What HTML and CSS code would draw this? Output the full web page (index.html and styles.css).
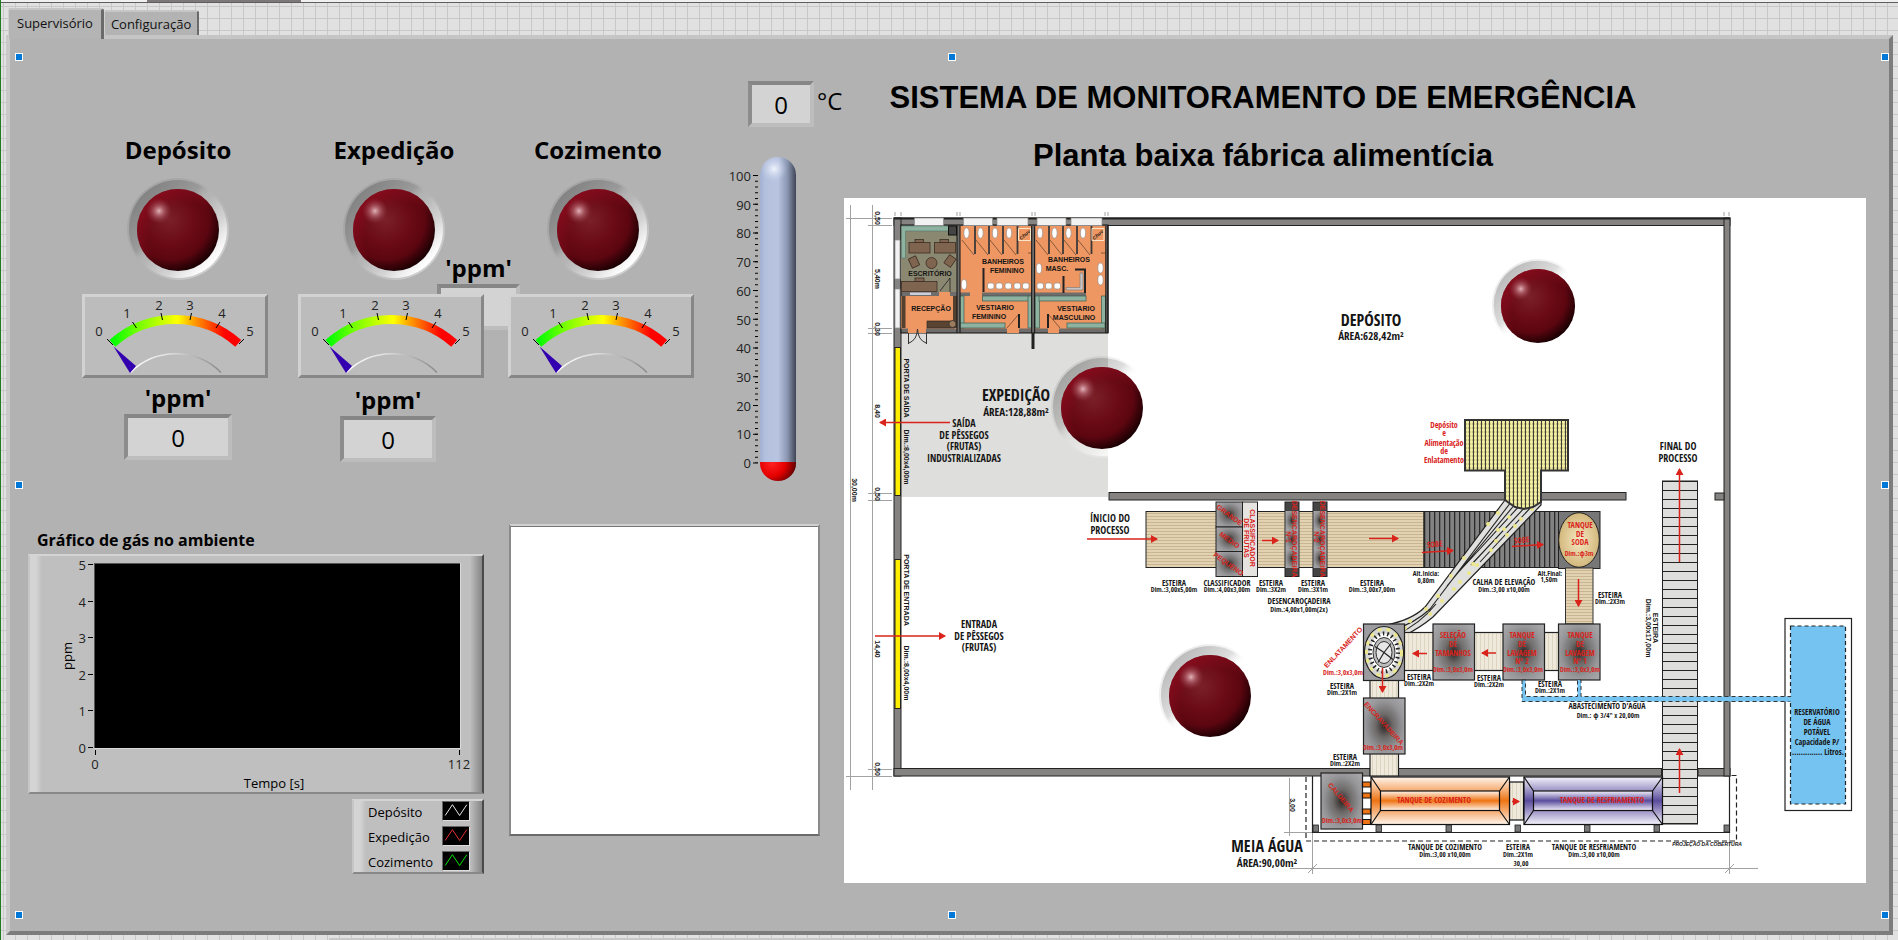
FILE: index.html
```html
<!DOCTYPE html>
<html lang="pt-BR">
<head>
<meta charset="utf-8">
<title>Sistema de monitoramento de emergência</title>
<link rel="stylesheet" href="styles.css">
</head>
<body>
<svg class="defs" aria-hidden="true">
  <defs>
    <linearGradient id="bezel" x1="0.15" y1="0.15" x2="0.85" y2="0.85">
      <stop offset="0" stop-color="#000" stop-opacity=".2"/>
      <stop offset=".35" stop-color="#000" stop-opacity=".1"/>
      <stop offset=".5" stop-color="#fff" stop-opacity=".02"/>
      <stop offset=".75" stop-color="#fff" stop-opacity=".35"/>
      <stop offset="1" stop-color="#fff" stop-opacity="1"/>
    </linearGradient>
    <radialGradient id="bulb" cx=".4" cy=".38" r=".64">
      <stop offset="0" stop-color="#7a2029"/>
      <stop offset=".45" stop-color="#6b0b16"/>
      <stop offset=".75" stop-color="#5c0610"/>
      <stop offset="1" stop-color="#1c0003"/>
    </radialGradient>
    <radialGradient id="rim" cx=".6" cy=".62" r=".64">
      <stop offset=".7" stop-color="#8c0c1e" stop-opacity="0"/>
      <stop offset="1" stop-color="#8c0c1e" stop-opacity=".8"/>
    </radialGradient>
    <radialGradient id="shine">
      <stop offset="0" stop-color="#e2b4ba"/>
      <stop offset=".4" stop-color="#b86c76" stop-opacity=".7"/>
      <stop offset="1" stop-color="#8a3540" stop-opacity="0"/>
    </radialGradient>
    <symbol id="led" viewBox="0 0 104 104">
      <circle cx="52" cy="51" r="51" fill="url(#bezel)" opacity=".4"/>
      <circle cx="52" cy="51" r="49" fill="url(#bezel)"/>
      <circle cx="52" cy="52" r="41" fill="url(#bulb)"/>
      <circle cx="52" cy="52" r="41" fill="url(#rim)"/>
      <circle cx="33" cy="33" r="13" fill="url(#shine)"/>
    </symbol>
    <linearGradient id="scale" gradientUnits="userSpaceOnUse" x1="27" x2="140" y1="0" y2="0">
      <stop offset="0" stop-color="#0f0"/>
      <stop offset=".2" stop-color="#66ff00"/>
      <stop offset=".58" stop-color="#ff0"/>
      <stop offset=".72" stop-color="#ffa000"/>
      <stop offset="1" stop-color="#f00"/>
    </linearGradient>
    <linearGradient id="hub" x1="0" x2="1" y1="0" y2="0">
      <stop offset="0" stop-color="#fff"/>
      <stop offset=".45" stop-color="#ddd"/>
      <stop offset="1" stop-color="#888"/>
    </linearGradient>
    <symbol id="dial" viewBox="0 0 180 78">
      <path d="M27.400 46.400A95 95 0 0 1 153.200 46.400" fill="none" stroke="url(#scale)" stroke-width="9"/>
      <path d="M22 42l6 6M47.500 25l4 6M76 16l1.500 7M106.500 16l-1.500 7M135 25l-4 6M159 42l-5 5" stroke="#000" stroke-width="1" fill="none"/>
      <path d="M45.500 75.500A64 64 0 0 1 136 75.500" fill="none" stroke="url(#hub)" stroke-width="1.500"/>
      <path d="M28.500 49.500L45 76l6-7z" fill="#3300b0"/>
    </symbol>
    <linearGradient id="tube" x1="0" x2="1" y1="0" y2="0">
      <stop offset="0" stop-color="#a3b0d0"/>
      <stop offset=".15" stop-color="#b4c1de"/>
      <stop offset=".5" stop-color="#b8c4e0"/>
      <stop offset=".75" stop-color="#8d99b4"/>
      <stop offset="1" stop-color="#3f4556"/>
    </linearGradient>
    <radialGradient id="fluid" gradientUnits="userSpaceOnUse" cx="772" cy="462" r="26">
      <stop offset="0" stop-color="#f22"/>
      <stop offset=".5" stop-color="#e60000"/>
      <stop offset="1" stop-color="#4a0000"/>
    </radialGradient>
    <radialGradient id="cap">
      <stop offset="0" stop-color="#f2f5fd"/>
      <stop offset="1" stop-color="#c4cfe9" stop-opacity="0"/>
    </radialGradient>
    <pattern id="minor" patternUnits="userSpaceOnUse" x="755" y="174" width="4" height="5.750">
      <rect width="4" height="1" fill="#000"/>
    </pattern>
    <pattern id="major" patternUnits="userSpaceOnUse" x="753" y="174" width="6" height="28.750">
      <rect width="6" height="1" fill="#000"/>
    </pattern>
    <pattern id="belt" patternUnits="userSpaceOnUse" width="10" height="3">
      <rect width="10" height="3" fill="#e2d2b2"/><rect width="10" height="1" fill="#c8b592"/>
    </pattern>
    <pattern id="beltlight" patternUnits="userSpaceOnUse" width="4" height="10">
      <rect width="4" height="10" fill="#eee9db"/><rect width="1" height="10" fill="#ddd5c2"/>
    </pattern>
    <pattern id="lift" patternUnits="userSpaceOnUse" x="1424" width="5" height="10">
      <rect width="5" height="10" fill="#828282"/><rect width="1.300" height="10" fill="#2a2a2a"/>
    </pattern>
    <pattern id="cans" patternUnits="userSpaceOnUse" x="1465" y="420" width="4" height="4">
      <rect width="4" height="4" fill="#a6a472"/><ellipse cx="2.400" cy="2" rx="1.600" ry="1.900" fill="#f2edA0"/><rect width=".8" height="4" fill="#222"/>
    </pattern>
    <pattern id="steps" patternUnits="userSpaceOnUse" x="1662" y="481" width="35" height="9">
      <rect width="35" height="9" fill="#dededc"/><rect width="35" height="1" fill="#222"/>
    </pattern>
    <radialGradient id="metal" r=".7">
      <stop offset="0" stop-color="#2a2725"/><stop offset=".3" stop-color="#6d6a69"/><stop offset=".65" stop-color="#97979a"/><stop offset="1" stop-color="#acacb0"/>
    </radialGradient>
    <radialGradient id="soda"><stop offset="0" stop-color="#f6e7c2"/><stop offset="1" stop-color="#d2b87c"/></radialGradient>
    <linearGradient id="hot" x1="0" x2="0" y1="0" y2="1">
      <stop offset="0" stop-color="#fff5ec"/><stop offset=".5" stop-color="#ee7414"/><stop offset="1" stop-color="#fff5ec"/>
    </linearGradient>
    <linearGradient id="cold" x1="0" x2="0" y1="0" y2="1">
      <stop offset="0" stop-color="#f4f2fb"/><stop offset=".5" stop-color="#5a4c9c"/><stop offset="1" stop-color="#f4f2fb"/>
    </linearGradient>
    <marker id="tip" markerUnits="userSpaceOnUse" markerWidth="8" markerHeight="8" refX="6" refY="4" orient="auto"><path d="M0 0L7 4L0 8z" fill="#d9231b"/></marker>
  </defs>
</svg>

<div class="ruler"></div>
<nav class="tabs" role="tablist">
  <button class="tab tab-active" role="tab" aria-selected="true">Supervisório</button>
  <button class="tab" role="tab" aria-selected="false">Configuração</button>
</nav>

<main class="panel">
  <section class="left">
    <div class="instruments">
      <div class="hidden-reading">
        <label class="title" for="v3">'ppm'</label>
        <input id="v3" class="value" type="text">
      </div>

      <div class="station">
        <h3 class="title">Depósito</h3>
        <svg class="led"><use href="#led"/></svg>
        <svg class="gauge" viewBox="0 0 180 78">
          <use href="#dial" width="180" height="78"/>
          <g class="dial-text"><text x="14" y="39">0</text><text x="42" y="21">1</text><text x="74" y="13">2</text><text x="105" y="13">3</text><text x="137" y="21">4</text><text x="165" y="39">5</text></g>
        </svg>
        <div class="reading-stack">
          <label class="title" for="v1">'ppm'</label>
          <input id="v1" class="value value-wide" type="text" value="0">
        </div>
      </div>

      <div class="station">
        <h3 class="title">Expedição</h3>
        <svg class="led"><use href="#led"/></svg>
        <svg class="gauge" viewBox="0 0 180 78">
          <use href="#dial" width="180" height="78"/>
          <g class="dial-text"><text x="14" y="39">0</text><text x="42" y="21">1</text><text x="74" y="13">2</text><text x="105" y="13">3</text><text x="137" y="21">4</text><text x="165" y="39">5</text></g>
        </svg>
        <div class="reading-stack reading-low">
          <label class="title" for="v2">'ppm'</label>
          <input id="v2" class="value value-mid" type="text" value="0">
        </div>
      </div>

      <div class="station station-last">
        <h3 class="title">Cozimento</h3>
        <svg class="led"><use href="#led"/></svg>
        <svg class="gauge" viewBox="0 0 180 78">
          <use href="#dial" width="180" height="78"/>
          <g class="dial-text"><text x="14" y="39">0</text><text x="42" y="21">1</text><text x="74" y="13">2</text><text x="105" y="13">3</text><text x="137" y="21">4</text><text x="165" y="39">5</text></g>
        </svg>
      </div>

      <div class="thermo">
        <div class="reading">
          <input id="temp" class="value" type="text" value="0">
          <label for="temp">°C</label>
        </div>
        <svg class="thermometer" viewBox="728 150 70 336">
          <rect x="760" y="156" width="36" height="324" rx="18" fill="url(#tube)"/>
          <path d="M760 461H796V462A18 18 0 0 1 760 462z" fill="url(#fluid)"/>
          <circle cx="774" cy="168" r="13" fill="url(#cap)"/>
          <rect x="755" y="174" width="3" height="288" fill="url(#minor)"/>
          <rect x="753" y="174" width="5" height="289" fill="url(#major)"/>
          <g class="scale-text">
            <text x="751" y="180">100</text><text x="751" y="209">90</text><text x="751" y="237">80</text><text x="751" y="266">70</text><text x="751" y="295">60</text><text x="751" y="324">50</text><text x="751" y="352">40</text><text x="751" y="381">30</text><text x="751" y="410">20</text><text x="751" y="438">10</text><text x="751" y="467">0</text>
          </g>
        </svg>
      </div>
    </div>

    <div class="lower">
      <section class="chart">
        <h4>Gráfico de gás no ambiente</h4>
        <div class="frame chart-frame">
          <svg class="plot" viewBox="30 555 452 236">
            <rect x="94" y="562" width="367" height="186" fill="#d9d9d9"/>
            <rect x="94" y="562" width="366" height="185" fill="#555"/>
            <rect x="95" y="563" width="365" height="184" fill="#000"/>
            <path d="M88 563.500h5M88 600.500h5M88 636.500h5M88 673.500h5M88 709.500h5M88 746.500h5M95.500 749v5M459.500 749v5" stroke="#000"/>
            <g class="scale-text"><text x="86" y="569">5</text><text x="86" y="606">4</text><text x="86" y="642">3</text><text x="86" y="679">2</text><text x="86" y="715">1</text><text x="86" y="752">0</text></g>
            <g class="dial-text"><text x="95" y="768">0</text><text x="459" y="768">112</text></g>
            <text class="axis" x="274" y="787">Tempo [s]</text>
            <text class="axis" transform="translate(72 655) rotate(-90)">ppm</text>
          </svg>
        </div>
        <ul class="frame legend">
          <li>Depósito<svg viewBox="0 0 28 20"><path d="M2 15L10 3L18 15L26 3" stroke="#fff"/></svg></li>
          <li>Expedição<svg viewBox="0 0 28 20"><path d="M2 15L10 3L18 15L26 3" stroke="#f33"/></svg></li>
          <li>Cozimento<svg viewBox="0 0 28 20"><path d="M2 15L10 3L18 15L26 3" stroke="#0f0"/></svg></li>
        </ul>
      </section>
      <div class="picture"></div>
    </div>
  </section>

  <section class="right">
    <header>
      <h1>SISTEMA DE MONITORAMENTO DE EMERGÊNCIA</h1>
      <h2>Planta baixa fábrica alimentícia</h2>
    </header>
    <svg class="plan" viewBox="844 198 1022 685" role="img" aria-label="Planta baixa">
      <rect x="844" y="198" width="1022" height="685" fill="#fff"/>
      <!-- dimension lines -->
      <path d="M850.500 205V790M872.500 205V790M846 218.500H892M868 225.500H892M868 328.500H892M868 333.500H892M868 493.500H892M868 500.500H892M868 769.500H892M846 776.500H892M1289.500 778V836M1284 832.500H1312M1312.500 833V874M1729.500 833V874M1290 868.500H1758M1308 873l9-9M1725 873l9-9M895 212v4M901 212v4M957 212v4M960 212v4M1032 212v4M1035 212v4M1105 212v4M1108 212v4M1724 212v4M1729 212v4" stroke="#a2a2a2" stroke-width="1" fill="none"/>
      <!-- shipping floor -->
      <rect x="901" y="333" width="207" height="164" fill="#dededc"/>
      <!-- outer walls -->
      <g fill="#858381" stroke="#222" stroke-width="1">
        <rect x="894" y="218" width="836" height="7.500"/>
        <rect x="894" y="218" width="7" height="558"/>
        <rect x="894" y="768.500" width="476" height="7.500"/>
        <rect x="1398.500" y="768.500" width="263" height="7.500"/>
        <rect x="1698" y="768.500" width="32" height="7.500"/>
        <rect x="1724" y="218" width="6" height="558"/>
        <rect x="1109" y="492.500" width="517" height="7.500"/>
        <rect x="1715" y="493" width="9" height="7"/>
      </g>
      <path d="M894 218.500H1730" stroke="#222" stroke-width="2"/>
      <rect x="895" y="347.500" width="5.500" height="148" fill="#ffee00" stroke="#222" stroke-width="1"/>
      <rect x="895" y="559.500" width="5.500" height="149" fill="#ffee00" stroke="#222" stroke-width="1"/>
      <!-- offices and changing rooms -->
      <rect x="901" y="225" width="207" height="108" fill="#6f6d6b" stroke="#111" stroke-width="1"/>
      <rect x="901" y="226" width="56" height="66" fill="#8b8872"/>
      <path d="M902 226H949V231H905.500V258H901.500V226z" fill="#8db3a0" stroke="#55776a" stroke-width=".6"/>
      <rect x="948.500" y="226" width="8" height="9" fill="#444" stroke="#111"/>
      <g fill="#7f6450" stroke="#3c2e22" stroke-width=".8">
        <rect x="909" y="242.500" width="21" height="10.500"/><rect x="934.500" y="242.500" width="21" height="10.500"/>
        <rect x="915" y="239.500" width="8.500" height="3"/><rect x="940" y="239.500" width="8.500" height="3"/>
        <rect x="901.500" y="281.500" width="35.500" height="10"/><rect x="915" y="278" width="9" height="3.500"/>
        <circle cx="931.500" cy="263" r="5.500"/>
        <rect x="910" y="257" width="8" height="10" transform="rotate(-25 914 262)"/><rect x="946" y="256" width="8" height="10" transform="rotate(35 950 261)"/>
      </g>
      <path d="M940 291L950 278V292" stroke="#222" fill="none" stroke-width=".8"/>
      <rect x="910" y="292.500" width="21" height="2.500" fill="#ccd"/>
      <g fill="#ee9762">
        <rect x="901" y="296" width="56" height="32.500"/><rect x="939" y="292" width="11" height="5"/>
        <rect x="960" y="226" width="71.500" height="66.500"/><rect x="960" y="296" width="71.500" height="32.500"/><rect x="970" y="292" width="12" height="5"/>
        <rect x="1035" y="226" width="71" height="66.500"/><rect x="1035" y="296" width="71" height="32.500"/><rect x="1086" y="292" width="20" height="5"/>
        <rect x="908" y="328" width="18" height="5"/><rect x="1007" y="328" width="12" height="5"/><rect x="1048" y="328" width="11" height="5"/>
      </g>
      <path d="M903.500 296V328M955 296V328" stroke="#54402e" stroke-width="4"/>
      <rect x="927" y="321" width="27" height="7" fill="#5a4431" stroke="#222" stroke-width=".6"/><circle cx="952.500" cy="324" r="3.500" fill="#9b7a5e" stroke="#222" stroke-width=".6"/>
      <g fill="#8db3a0" stroke="#3d5a50" stroke-width=".7">
        <rect x="960" y="296" width="4" height="32"/><rect x="982.500" y="296" width="46" height="5"/><rect x="1028" y="296" width="3.500" height="32"/><rect x="960" y="323" width="45" height="5"/>
        <rect x="1035" y="296" width="4.500" height="32"/><rect x="1039" y="296" width="47" height="5"/><rect x="1101.500" y="296" width="4" height="32"/><rect x="1067" y="323" width="38" height="5"/>
      </g>
      <path d="M975 226v28M989 226v28M1003 226v28M1017.500 226v28M1049 226v28M1063 226v28M1077 226v28M1091.500 226v28" stroke="#3c3a39" stroke-width="1.800"/>
      <path d="M962 240l12 15M976 240l12 15M990 240l12 15M1004 240l12 15M1036 240l12 15M1050 240l12 15M1064 240l12 15M1078 240l12 15M1019 314l-12 14M1048 314l12 14M1028 253h4M1101 253h4" stroke="#5b3d2c" stroke-width=".7"/>
      <path d="M983.500 268V292M1063.500 276V293M1075 269.500H1085V293M1019 314v14M1048 314v14" stroke="#222" stroke-width="2" fill="none"/>
      <path d="M1080 273H1083V290H1066V287.500H1080z" fill="#c9c4c1" stroke="#777" stroke-width=".6"/>
      <g fill="#fff" stroke="#9a8f8a" stroke-width=".7">
        <ellipse cx="966.500" cy="233" rx="2.700" ry="5.200"/><ellipse cx="980.500" cy="233" rx="2.700" ry="5.200"/><ellipse cx="995" cy="233" rx="2.700" ry="5.200"/><ellipse cx="1009" cy="233" rx="2.700" ry="5.200"/>
        <ellipse cx="1040" cy="233" rx="2.700" ry="5.200"/><ellipse cx="1054.500" cy="233" rx="2.700" ry="5.200"/><ellipse cx="1068.500" cy="233" rx="2.700" ry="5.200"/><ellipse cx="1083" cy="233" rx="2.700" ry="5.200"/>
        <ellipse cx="964" cy="284.500" rx="2.700" ry="5"/><ellipse cx="1039" cy="268.500" rx="2.700" ry="5"/><ellipse cx="1100.500" cy="268" rx="2.700" ry="5"/><ellipse cx="1100.500" cy="280" rx="2.700" ry="5"/>
        <rect x="987.500" y="283" width="6.500" height="6" rx="2"/><rect x="996" y="283" width="6.500" height="6" rx="2"/><rect x="1005" y="283" width="6.500" height="6" rx="2"/><rect x="1014" y="283" width="6.500" height="6" rx="2"/><rect x="1022.500" y="283" width="6.500" height="6" rx="2"/>
        <rect x="1037" y="283" width="6.500" height="6" rx="2"/><rect x="1045.500" y="283" width="6.500" height="6" rx="2"/><rect x="1054" y="283" width="6.500" height="6" rx="2"/>
      </g>
      <path d="M1018.500 228.500h12v12h-12zM1092 228.500h12v12h-12z" fill="none" stroke="#fbe3c8"/>
      <path d="M957 226V333M960 226V333M1031.700 226V333M1034.700 226V333M1105.800 226V333M1108 226V333" stroke="#111" stroke-width="1"/>
      <path d="M1033 333v16" stroke="#222" stroke-width="3"/>
      <g fill="#f2f2f2" stroke="#8a8a8a" stroke-width=".7">
        <rect x="914.500" y="218" width="29" height="7.500"/><rect x="963.500" y="218" width="29" height="7.500"/><rect x="997" y="218" width="31" height="7.500"/><rect x="1037" y="218" width="29" height="7.500"/><rect x="1071" y="218" width="31" height="7.500"/>
        <rect x="895" y="240" width="5" height="39"/><rect x="895" y="289" width="5" height="39"/>
      </g>
      <path d="M908.500 333v11M926.500 333v11M909 343Q917 340 917.500 329Q918 340 926 343" fill="none" stroke="#333" stroke-width="1"/>
      <!-- main belt -->
      <g stroke="#222" stroke-width="1">
        <rect x="1146" y="511.500" width="278" height="56" fill="url(#belt)"/>
        <rect x="1424" y="511.500" width="135" height="56" fill="url(#lift)"/>
        <rect x="1216" y="502" width="26.500" height="25" fill="url(#metal)"/><rect x="1216" y="527" width="26.500" height="24.500" fill="url(#metal)"/><rect x="1216" y="551.500" width="26.500" height="25" fill="url(#metal)"/>
        <rect x="1242.500" y="502" width="15" height="74.500" fill="#e6e4e1"/>
        <rect x="1285" y="502" width="14" height="74.500" fill="#444"/><rect x="1313" y="502" width="14" height="74.500" fill="#444"/>
      </g>
      <g fill="url(#metal)"><rect x="1285.500" y="511" width="13" height="19"/><rect x="1285.500" y="530" width="13" height="19"/><rect x="1285.500" y="549" width="13" height="19"/><rect x="1313.500" y="511" width="13" height="19"/><rect x="1313.500" y="530" width="13" height="19"/><rect x="1313.500" y="549" width="13" height="19"/></g>
      <!-- soda tank and vertical belt -->
      <rect x="1558.500" y="511.500" width="41.500" height="57" fill="#777" stroke="#222"/>
      <ellipse cx="1579" cy="540" rx="20.300" ry="27.300" fill="url(#soda)" stroke="#222"/>
      <rect x="1565.500" y="568" width="27.500" height="56" fill="url(#belt)" stroke="#333"/>
      <!-- can feeder and chute -->
      <path d="M1505 500L1425 607Q1412 620 1386 625L1400 638Q1420 628 1433 617L1541 505V495H1505z" fill="#e0e0de" stroke="#222" stroke-width="1.200"/>
      <path d="M1511 502L1430 609M1516 503L1447 586M1522 503L1455 576M1528 504L1471 565M1533 505L1480 562M1430 609Q1414 624 1392 630M1436 604Q1420 624 1396 635" stroke="#222" stroke-width="1.100" fill="none"/>
      <path d="M1498 513h.1M1509 517h.1M1521 519h.1M1532 509h.1M1488 524h.1M1498 530h.1M1515 526h.1M1504 529h.1M1507 535h.1M1496 541h.1M1491 550h.1M1464 558h.1M1473 564h.1M1477 565h.1M1469 573h.1M1451 576h.1M1460 582h.1M1454 589h.1M1438 596h.1M1442 601h.1M1426 609h.1M1430 614h.1M1410 621h.1M1405 628h.1" stroke="#ece78c" stroke-width="4" stroke-linecap="round"/>
      <path d="M1465 420H1568V470.500H1541V502L1533 507L1524 509L1515 507L1505 500V470.500H1465z" fill="url(#cans)" stroke="#333" stroke-width="2"/>
      <!-- exit ladder -->
      <rect x="1662.500" y="481" width="35" height="343" fill="url(#steps)" stroke="#222"/>
      <!-- washing row -->
      <g stroke="#222" stroke-width="1.200">
        <rect x="1400" y="632.500" width="160" height="38" fill="url(#beltlight)"/>
        <rect x="1370" y="675" width="28.500" height="101" fill="url(#beltlight)"/>
        <rect x="1363.500" y="624" width="41" height="56.500" fill="#9c9ca0"/>
        <rect x="1433" y="624" width="41.500" height="56" fill="url(#metal)"/><rect x="1503" y="624" width="41.500" height="56" fill="url(#metal)"/><rect x="1558.500" y="624" width="41.500" height="56" fill="url(#metal)"/>
        <rect x="1363.500" y="698" width="41.500" height="56" fill="url(#metal)"/>
        <rect x="1321" y="773" width="41.500" height="56" fill="url(#metal)"/>
      </g>
      <ellipse cx="1384" cy="652.500" rx="19.500" ry="26" fill="#d5d5d3" stroke="#222" stroke-width="1.200"/>
      <ellipse cx="1384" cy="652.500" rx="17.500" ry="23.500" fill="none" stroke="#ece78c" stroke-width="3" stroke-dasharray="4 5"/>
      <ellipse cx="1384" cy="652.500" rx="14" ry="19" fill="#fff" stroke="#222" stroke-width="4" stroke-dasharray="1.500 3"/>
      <ellipse cx="1384" cy="652.500" rx="11" ry="15" fill="#bdbdbd" stroke="#333"/>
      <ellipse cx="1384" cy="652.500" rx="8" ry="11" fill="#e6e6e6" stroke="#333"/>
      <path d="M1384 652.500l-9-6M1384 652.500l7-9M1384 652.500l9 7M1384 652.500l-6 10" stroke="#222" stroke-width="1.200"/>
      <!-- cooking and cooling tanks -->
      <g stroke="#111" stroke-width="1.200">
        <path d="M1362.500 782h8v5h-8zM1362.500 793h8v5h-8zM1362.500 809h8v5h-8zM1362.500 819.500h8v5h-8z" fill="#ee7414"/>
        <rect x="1509.500" y="782" width="14" height="38" fill="url(#beltlight)"/>
        <rect x="1371" y="777" width="138.500" height="47.500" fill="url(#hot)"/>
        <rect x="1380.500" y="791" width="119" height="19.500" fill="url(#hot)"/>
        <path d="M1371 777l9.500 14M1371 824.500l9.500-14M1509.500 777l-10 14M1509.500 824.500l-10-14" />
        <rect x="1524" y="777" width="138.500" height="47.500" fill="url(#cold)"/>
        <rect x="1533.500" y="791" width="119" height="19.500" fill="url(#cold)"/>
        <path d="M1524 777l9.500 14M1524 824.500l9.500-14M1662.500 777l-10 14M1662.500 824.500l-10-14"/>
      </g>
      <path d="M1312.500 776V832.500H1729.500V776" fill="none" stroke="#222" stroke-width="1.200"/>
      <g fill="#777" stroke="#222" stroke-width=".8">
        <rect x="1313" y="825" width="5.500" height="7"/><rect x="1376" y="825" width="5.500" height="7"/><rect x="1446" y="825" width="5.500" height="7"/><rect x="1515" y="825" width="5.500" height="7"/><rect x="1584.500" y="825" width="5.500" height="7"/><rect x="1654" y="825" width="5.500" height="7"/><rect x="1724" y="825" width="5.500" height="7"/>
      </g>
      <path d="M1306 777V841H1736.500V775.500H1730" fill="none" stroke="#222" stroke-width="1.200" stroke-dasharray="5 3"/>
      <!-- water supply -->
      <rect x="1785" y="618.500" width="66.500" height="192" fill="#fff" stroke="#222" stroke-width="1.200"/>
      <rect x="1790.500" y="626" width="55" height="178" fill="#74c3f0" stroke="#222" stroke-width="1.200" stroke-dasharray="4 3"/>
      <path d="M1522 680V701.500H1790.500V696.500H1581V680H1577.500V696.500H1525.500V680z" fill="#74c3f0" stroke="#333" stroke-width="1" stroke-dasharray="4 3"/>
      <rect x="1786" y="697" width="8" height="4.500" fill="#74c3f0"/>
      <!-- flow arrows -->
      <g stroke="#d9231b" stroke-width="1.500">
        <path d="M950 422.500H880" marker-end="url(#tip)"/><path d="M875 636H945" marker-end="url(#tip)"/><path d="M1087 539H1157" marker-end="url(#tip)"/>
        <path d="M1262 540.500H1278" marker-end="url(#tip)"/><path d="M1369 538.500H1398" marker-end="url(#tip)"/><path d="M1422 552.500L1453 550.500" marker-end="url(#tip)"/><path d="M1512 546.500L1543 544.500" marker-end="url(#tip)"/>
        <path d="M1578.500 579V606" marker-end="url(#tip)"/><path d="M1679.500 562V469" marker-end="url(#tip)"/><path d="M1679.500 793V749" marker-end="url(#tip)"/>
        <path d="M1427 653.500H1413" marker-end="url(#tip)"/><path d="M1496 653H1482" marker-end="url(#tip)"/><path d="M1382.500 668V692" marker-end="url(#tip)"/><path d="M1512 801.500H1519" marker-end="url(#tip)"/>
      </g>
      <!-- room names -->
      <g class="room">
        <text x="930" y="276">ESCRITÓRIO</text><text x="931" y="311">RECEPÇÃO</text>
        <text x="1003" y="264">BANHEIROS</text><text x="1007" y="273">FEMININO</text><text x="995" y="310">VESTIARIO</text><text x="989" y="319">FEMININO</text>
        <text x="1069" y="262">BANHEIROS</text><text x="1057" y="271">MASC.</text><text x="1076" y="311">VESTIARIO</text><text x="1074" y="320">MASCULINO</text>
        <text class="slant" transform="translate(1026 236) rotate(-42)">Chuv</text><text class="slant" transform="translate(1099 236) rotate(-42)">Chuv</text>
      </g>
      <g class="dim">
        <text transform="translate(875 218) rotate(90)">0,50</text><text transform="translate(875 279) rotate(90)">5,40m</text><text transform="translate(875 329) rotate(90)">0,30</text><text transform="translate(875 411) rotate(90)">8,40</text><text transform="translate(875 494) rotate(90)">0,50</text><text transform="translate(875 649) rotate(90)">14,40</text><text transform="translate(875 769) rotate(90)">0,50</text><text transform="translate(852 490) rotate(90)">30,00m</text><text transform="translate(1290 805) rotate(90)">3,00</text>
        <text transform="translate(904 388) rotate(90)">PORTA DE SAÍDA</text><text transform="translate(904 457) rotate(90)">Dim.:8,00x4,00m</text>
        <text transform="translate(904 590) rotate(90)">PORTA DE ENTRADA</text><text transform="translate(904 673) rotate(90)">Dim.:8,00x4,00m</text>
        <text transform="translate(1653 628) rotate(90)">ESTEIRA</text><text transform="translate(1646 628) rotate(90)">Dim.:3,00x17,00m</text>
      </g>
      <g class="area">
        <text x="1016" y="401">EXPEDIÇÃO</text><text x="1371" y="326">DEPÓSITO</text><text x="1267" y="852">MEIA ÁGUA</text>
      </g>
      <g class="size">
        <text x="1016" y="416">ÁREA:128,88m²</text><text x="1371" y="340">ÁREA:628,42m²</text><text x="1267" y="867">ÁREA:90,00m²</text>
      </g>
      <g class="note">
        <text x="964" y="427">SAÍDA</text><text x="964" y="439">DE PÊSSEGOS</text><text x="964" y="450">(FRUTAS)</text><text x="964" y="462">INDUSTRIALIZADAS</text>
        <text x="979" y="628">ENTRADA</text><text x="979" y="640">DE PÊSSEGOS</text><text x="979" y="651">(FRUTAS)</text>
        <text x="1110" y="522">ÍNICIO DO</text><text x="1110" y="534">PROCESSO</text>
        <text x="1678" y="450">FINAL DO</text><text x="1678" y="462">PROCESSO</text>
      </g>
      <g class="item">
        <text x="1174" y="586">ESTEIRA</text><text x="1227" y="586">CLASSIFICADOR</text><text x="1271" y="586">ESTEIRA</text><text x="1313" y="586">ESTEIRA</text><text x="1299" y="604">DESENCAROÇADEIRA</text><text x="1372" y="586">ESTEIRA</text>
        <text x="1504" y="585">CALHA DE ELEVAÇÃO</text><text x="1610" y="598">ESTEIRA</text>
        <text x="1419" y="680">ESTEIRA</text><text x="1489" y="681">ESTEIRA</text><text x="1550" y="687">ESTEIRA</text><text x="1342" y="689">ESTEIRA</text><text x="1345" y="760">ESTEIRA</text>
        <text x="1607" y="709">ABASTECIMENTO D'AGUA</text>
        <text x="1445" y="850">TANQUE DE COZIMENTO</text><text x="1518" y="850">ESTEIRA</text><text x="1594" y="850">TANQUE DE RESFRIAMENTO</text>
        <text x="1817" y="715">RESERVATÓRIO</text><text x="1817" y="725">DE ÁGUA</text><text x="1817" y="735">POTÁVEL</text><text x="1817" y="745">Capacidade P/</text><text x="1818" y="755">.............. Litros.</text>
      </g>
      <g class="spec">
        <text x="1174" y="592">Dim.:3,00x5,00m</text><text x="1227" y="592">Dim.:4,00x3,00m</text><text x="1271" y="592">Dim.:3X2m</text><text x="1313" y="592">Dim.:3X1m</text><text x="1299" y="612">Dim.:4,00x1,00m(2x)</text><text x="1372" y="592">Dim.:3,00x7,00m</text>
        <text x="1426" y="576">Alt.Inicia:</text><text x="1426" y="583">0,80m</text><text x="1550" y="576">Alt.Final:</text><text x="1549" y="582">1,50m</text><text x="1504" y="592">Dim.:3,00 x10,00m</text><text x="1610" y="604">Dim.:2X3m</text>
        <text x="1419" y="686">Dim.:2X2m</text><text x="1489" y="687">Dim.:2X2m</text><text x="1550" y="693">Dim.:2X1m</text><text x="1342" y="695">Dim.:2X1m</text><text x="1345" y="766">Dim.:2X2m</text>
        <text x="1608" y="718">Dim.: ɸ 3/4" x 20,00m</text>
        <text x="1445" y="857">Dim.:3,00 x10,00m</text><text x="1518" y="857">Dim.:2X1m</text><text x="1594" y="857">Dim.:3,00 x10,00m</text><text x="1521" y="866">30,00</text>
        <text class="slant" x="1707" y="846">PROJEÇÃO DA COBERTURA</text>
      </g>
      <g class="item red">
        <text x="1444" y="428">Depósito</text><text x="1444" y="436">e</text><text x="1444" y="446">Alimentação</text><text x="1444" y="454">de</text><text x="1444" y="463">Enlatamento</text>
        <text transform="translate(1435 547) rotate(-5)">SOBE</text><text transform="translate(1522 543) rotate(-5)">SOBE</text>
        <text x="1580" y="528">TANQUE</text><text x="1580" y="537">DE</text><text x="1580" y="545">SODA</text>
        <text x="1453" y="638">SELEÇÃO</text><text x="1453" y="647">DE</text><text x="1453" y="656">TAMANHOS</text>
        <text x="1522" y="638">TANQUE</text><text x="1522" y="647">DE</text><text x="1522" y="656">LAVAGEM</text><text x="1522" y="664">Nº 2</text>
        <text x="1580" y="638">TANQUE</text><text x="1580" y="647">DE</text><text x="1580" y="656">LAVAGEM</text><text x="1580" y="664">Nº 1</text>
        <text x="1434" y="803">TANQUE DE COZIMENTO</text><text x="1602" y="803">TANQUE DE RESFRIAMENTO</text>
      </g>
      <g class="spec red">
        <text x="1579" y="556">Dim.:ɸ3m</text><text x="1453" y="672">Dim.:3,0x3,0m</text><text x="1523" y="672">Dim.:3,0x3,0m</text><text x="1580" y="672">Dim.:3,0x3,0m</text><text x="1343" y="675">Dim.:3,0x3,0m</text><text x="1383" y="750">Dim.:3,0x3,0m</text><text x="1342" y="823">Dim.:3,0x3,0m</text>
      </g>
      <g class="tag red">
        <text transform="translate(1228 517) rotate(36)">GRANDE</text><text transform="translate(1228 542) rotate(36)">MEDIO</text><text transform="translate(1227 566) rotate(36)">PEQUENO</text>
        <text transform="translate(1250 538) rotate(90)">CLASSIFICADOR</text><text transform="translate(1244 538) rotate(90)">DE FRUTAS</text>
        <text transform="translate(1292 539) rotate(90)">DESENCAROÇADEIRA</text><text transform="translate(1286 537) rotate(90)">Nº1</text><text transform="translate(1320 539) rotate(90)">DESENCAROÇADEIRA</text><text transform="translate(1314 537) rotate(90)">Nº2</text>
        <text transform="translate(1345 649) rotate(-47)">ENLATAMENTO</text><text transform="translate(1382 725) rotate(48)">ENCRAVADEIRA</text><text transform="translate(1339 799) rotate(50)">CALDEIRA</text>
      </g>
      <!-- zone alarms -->
      <use href="#led" x="1050" y="356" width="104" height="104"/>
      <use href="#led" x="1491" y="259" width="94" height="94"/>
      <use href="#led" x="1158" y="644" width="104" height="104"/>
    </svg>
  </section>

  <span class="handle h-top h-left"></span><span class="handle h-top h-center"></span><span class="handle h-top h-right"></span>
  <span class="handle h-middle h-left"></span><span class="handle h-middle h-right"></span>
  <span class="handle h-bottom h-left"></span><span class="handle h-bottom h-center"></span><span class="handle h-bottom h-right"></span>
</main>
<div class="scrollbar"><span></span></div>
</body>
</html>
```
FILE: styles.css
```css
* { box-sizing: border-box; }
body {
  margin: 0;
  min-height: 100vh;
  display: flex;
  flex-direction: column;
  border-left: 1px solid #1f7d1f;
  background:
    repeating-linear-gradient(90deg, transparent 0 3px, #c8c8c8 3px 4px, transparent 4px 12px),
    repeating-linear-gradient(180deg, transparent 0 6px, #c8c8c8 6px 7px, transparent 7px 12px),
    #e1e1e1;
  font-family: "Open Sans", "Noto Sans", sans-serif;
  font-size: 13px;
  color: #000;
}
.defs { position: absolute; width: 0; height: 0; }
h1, h2, h3, h4, ul { margin: 0; padding: 0; }

.ruler {
  height: 3px;
  border-bottom: 1px solid #5e5e5e;
  background: linear-gradient(90deg, #f0f0f0 146px, #7d7878 146px 300px, #f0f0f0 300px);
}
.tabs { display: flex; align-items: flex-end; padding: 5px 0 0 7px; }
.tab {
  height: 25px;
  padding: 0 6px;
  border: solid;
  border-width: 2px 2px 0 1px;
  border-color: #c6c6c6 #6a6a6a #c6c6c6 #cfcfcf;
  border-radius: 2px 3px 0 0;
  background: #b3b3b3;
  font: 13px/20px "Open Sans", "Noto Sans", sans-serif;
  color: #111;
}
.tab-active {
  position: relative;
  z-index: 1;
  height: 31px;
  margin-bottom: -4px;
  padding: 0 8px 4px;
  border-right-width: 3px;
  background: #b4b4b4;
}

.panel {
  position: relative;
  flex: 1;
  display: grid;
  grid-template-columns: 816px 1fr;
  margin: 0 5px 0 5px;
  padding: 1px 23px 40px 18px;
  border: 4px solid;
  border-color: #c5c5c5 #7c7c7c #7c7c7c #c9c9c9;
  background: #b2b2b2;
}

/* instruments */
.instruments {
  position: relative;
  display: grid;
  grid-template-columns: 216px 210px 220px 1fr;
  padding-left: 54px;
}
.station {
  position: relative;
  width: 186px;
  padding-top: 94px;
  display: flex;
  flex-direction: column;
  align-items: center;
}
.title { font-size: 24px; line-height: 32px; font-weight: 700; }
.led { width: 104px; height: 104px; margin: 12px 0; }
.station > .title, .led, .reading-stack { margin-left: 6px; }
.station-last > .title, .station-last .led { margin-left: -6px; }
.reading-stack { display: flex; flex-direction: column; align-items: center; }
.reading-low { margin: 2px 0 0 -6px; }
.gauge {
  width: 186px;
  height: 84px;
  margin-bottom: 4px;
  border: 3px solid;
  border-color: #d2d2d2 #878787 #878787 #d2d2d2;
  background: #bcbcbc;
}
.dial-text, .scale-text { font-size: 13px; fill: #222; text-anchor: middle; }
.scale-text { text-anchor: end; }
.value {
  width: 66px;
  height: 46px;
  padding: 0;
  border: 4px solid;
  border-color: #868686 #bdbdbd #bdbdbd #8c8c8c;
  background: #d3d3d3;
  font: 24px/38px "Open Sans", "Noto Sans", sans-serif;
  text-align: center;
  color: #000;
}
.value-wide { width: 108px; }
.value-mid { width: 96px; }
.hidden-reading {
  position: absolute;
  left: 409px;
  top: 212px;
  display: flex;
  flex-direction: column;
  align-items: center;
}
.hidden-reading .value { width: 83px; }
.thermo { padding-top: 41px; }
.reading { display: flex; gap: 3px; padding-left: 20px; font-size: 24px; line-height: 40px; }
.thermometer { display: block; width: 70px; height: 336px; margin-top: 24px; }

/* chart row */
.lower {
  display: flex;
  gap: 25px;
  margin-top: 37px;
}
.chart { width: 456px; }
.chart h4 { padding: 4px 0 2px 9px; font-size: 16px; line-height: 24px; }
.frame {
  border: 2px solid;
  border-color: #d4d4d4 #4a4a4a #888 #c6c6c6;
  background: linear-gradient(90deg, #d4d4d4 6px, #bfbfbf 12px calc(100% - 12px), #868686);
}
.chart-frame { height: 240px; }
.plot { display: block; width: 452px; height: 236px; }
.axis { font-size: 13px; text-anchor: middle; }
.legend {
  width: 132px;
  margin: 5px 0 0 auto;
  padding-left: 14px;
  list-style: none;
  line-height: 22px;
}
.legend li { display: flex; justify-content: space-between; height: 25px; padding-right: 12px; }
.legend li:last-child { height: 21px; }
.legend svg { width: 28px; height: 20px; border: 1px solid; border-color: #666 #ddd #ddd #666; background: #000; }
.legend path { fill: none; }
.picture {
  width: 311px;
  height: 312px;
  border: 2px solid;
  border-color: #d0d0d0 #8a8a8a #6a6a6a #8a8a8a;
  box-shadow: inset 0 1px #777;
  background: #fff;
}

/* floor plan */
.right header {
  padding: 40px 184px 24px 0;
  text-align: center;
  font-family: "Liberation Sans", Arial, sans-serif;
}
h1, h2 { font-size: 31px; line-height: 36px; white-space: nowrap; }
h2 { margin-top: 22px; }
.plan {
  display: block;
  width: 100%;
  font-family: "Open Sans Condensed", "Roboto Condensed", "Liberation Sans", sans-serif;
  font-weight: 700;
}
.plan text { text-anchor: middle; fill: #151515; }
.plan .red text { fill: #d9231b; }
.plan .area { font-size: 16px; }
.plan .size { font-size: 11px; }
.plan .note { font-size: 10px; }
.plan .item { font-size: 8px; }
.plan .spec { font-size: 7px; }
.plan .room, .plan .dim, .plan .tag { font: 700 7px "Liberation Sans", Arial, sans-serif; }
.plan .slant { font: italic 700 5px "Liberation Sans", Arial, sans-serif; }

/* selection handles */
.handle {
  position: absolute;
  width: 8px;
  height: 8px;
  border: 1px solid #fff;
  background: #0078d7;
}
.h-top { top: 14px; }
.h-middle { top: calc(50% - 4px); }
.h-bottom { bottom: 12px; }
.h-left { left: 5px; }
.h-center { left: calc(50% - 2px); }
.h-right { right: 0; }

.scrollbar { height: 5px; padding: 3px 328px 0; }
.scrollbar span { display: block; height: 2px; background: #c8c8c8; }
```
